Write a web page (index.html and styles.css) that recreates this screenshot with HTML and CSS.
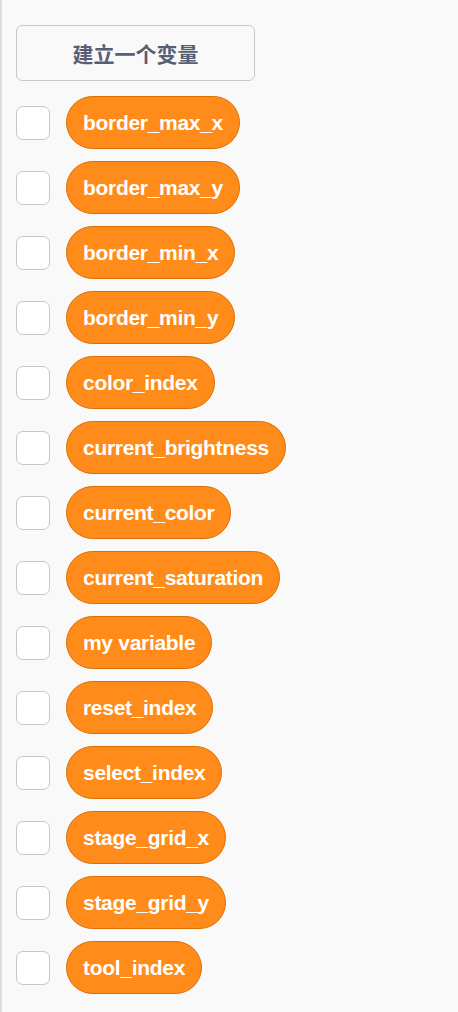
FILE: index.html
```html
<!DOCTYPE html>
<html>
<head>
<meta charset="utf-8">
<link rel="stylesheet" href="styles.css">
</head>
<body>
<div class="palette">
  <button class="make-var">建立一个变量</button>
  <ul class="var-list">
    <li class="var-row"><span class="check"></span><span class="pill">border_max_x</span></li>
    <li class="var-row"><span class="check"></span><span class="pill">border_max_y</span></li>
    <li class="var-row"><span class="check"></span><span class="pill">border_min_x</span></li>
    <li class="var-row"><span class="check"></span><span class="pill">border_min_y</span></li>
    <li class="var-row"><span class="check"></span><span class="pill">color_index</span></li>
    <li class="var-row"><span class="check"></span><span class="pill">current_brightness</span></li>
    <li class="var-row"><span class="check"></span><span class="pill">current_color</span></li>
    <li class="var-row"><span class="check"></span><span class="pill">current_saturation</span></li>
    <li class="var-row"><span class="check"></span><span class="pill">my variable</span></li>
    <li class="var-row"><span class="check"></span><span class="pill">reset_index</span></li>
    <li class="var-row"><span class="check"></span><span class="pill">select_index</span></li>
    <li class="var-row"><span class="check"></span><span class="pill">stage_grid_x</span></li>
    <li class="var-row"><span class="check"></span><span class="pill">stage_grid_y</span></li>
    <li class="var-row"><span class="check"></span><span class="pill">tool_index</span></li>
  </ul>
</div>
</body>
</html>
```
FILE: styles.css
```css
html, body {
  margin: 0;
  padding: 0;
  background: #f9f9f9;
}
.palette {
  box-sizing: border-box;
  width: 458px;
  height: 1012px;
  border-left: 2px solid #dedede;
  padding: 25px 0 0 14px;
  display: flex;
  flex-direction: column;
  align-items: flex-start;
}
.make-var {
  box-sizing: border-box;
  width: 239px;
  height: 56px;
  background: #f9f9f9;
  border: 1px solid #c9c9c9;
  border-radius: 6px;
  font-family: "Noto Sans CJK SC", sans-serif;
  font-weight: 700;
  font-size: 21px;
  color: #575e75;
  padding: 0;
  margin: 0 0 15px 0;
}
.var-list {
  list-style: none;
  margin: 0;
  padding: 0;
  display: flex;
  flex-direction: column;
  gap: 12px;
}
.var-row {
  display: flex;
  align-items: center;
  gap: 16px;
  height: 53px;
}
.check {
  box-sizing: border-box;
  width: 34px;
  height: 34px;
  background: #ffffff;
  border: 1px solid #c6c6c6;
  border-radius: 7px;
}
.pill {
  box-sizing: border-box;
  height: 53px;
  display: flex;
  align-items: center;
  padding: 0 16px;
  background: #ff8c1a;
  border: 1px solid #db6e00;
  border-radius: 27px;
  color: #ffffff;
  font-family: "Liberation Sans", Arial, sans-serif;
  font-weight: 700;
  font-size: 21px;
  letter-spacing: -0.3px;
  white-space: pre;
}
```
